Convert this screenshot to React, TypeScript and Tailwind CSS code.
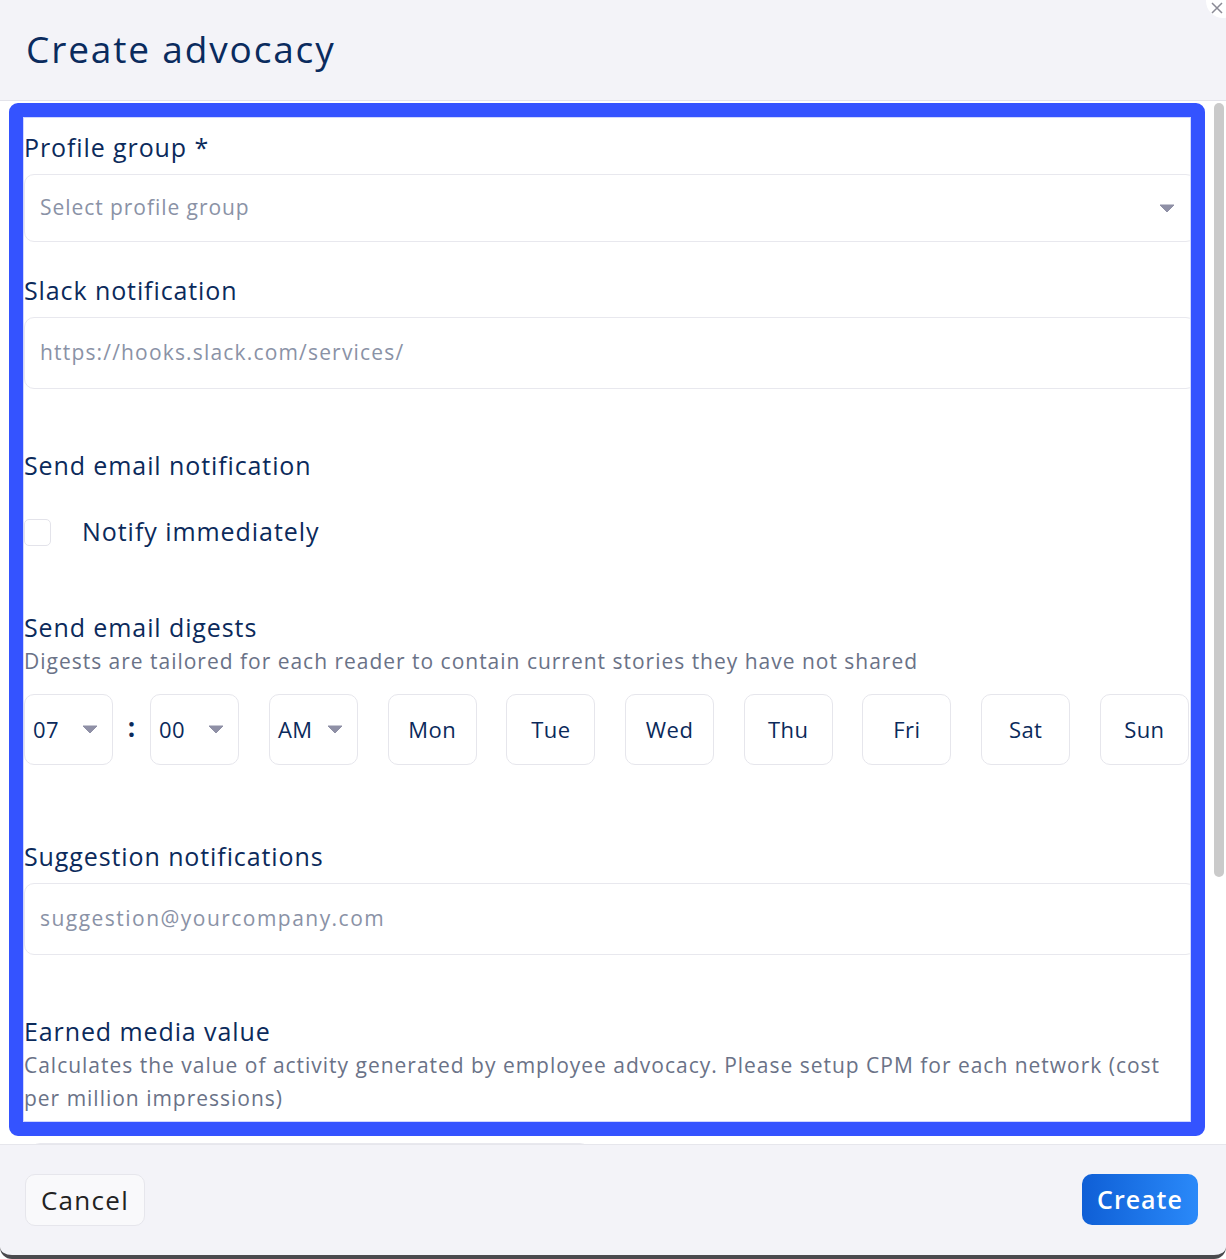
import React from "react";

const font = { fontFamily: '"Open Sans", "Noto Sans", sans-serif' };

function Caret({ className = "" }: { className?: string }) {
  return (
    <svg width="16" height="9" viewBox="0 0 16 9" className={className}>
      <path d="M1 1 L15 1 L8 8 Z" fill="#8f90a6" stroke="#8f90a6" strokeWidth="1" strokeLinejoin="round" />
    </svg>
  );
}

function Label({ children }: { children: React.ReactNode }) {
  return <div className="text-[25px] leading-[36px] tracking-[0.036em] text-[#0b2a5b]">{children}</div>;
}

function TimeSelect({ value }: { value: string }) {
  return (
    <div className="w-[89px] h-[71px] rounded-[10px] border border-[#e6e6ec] bg-white flex items-center justify-between pl-[8px] pr-[14px]">
      <span className="text-[22px] tracking-[0.02em] text-[#0b2a5b]">{value}</span>
      <Caret />
    </div>
  );
}

function DayBox({ day }: { day: string }) {
  return (
    <div className="w-[89px] h-[71px] rounded-[10px] border border-[#e6e6ec] bg-white flex items-center justify-center">
      <span className="text-[22px] tracking-[0.02em] text-[#0b2a5b]">{day}</span>
    </div>
  );
}

export default function App() {
  const days = ["Mon", "Tue", "Wed", "Thu", "Fri", "Sat", "Sun"];
  return (
    <div
      style={font}
      className="relative w-[1226px] h-[1259px] bg-[#f3f3f8] flex flex-col overflow-hidden rounded-b-[12px] border-b-4 border-[#4a4a4e]"
    >
      {/* close button */}
      <div className="absolute right-[-14px] top-[-16px] w-[34px] h-[34px] rounded-full bg-white flex items-end justify-start pl-[5px] pb-[4px] z-20">
        <svg width="12" height="12" viewBox="0 0 12 12">
          <path d="M1 1 L11 11 M11 1 L1 11" stroke="#8a8a95" strokeWidth="1.5" />
        </svg>
      </div>

      {/* header */}
      <div className="h-[101px] shrink-0 border-b border-[#e3e3ea] px-[26px] flex items-center">
        <h1 className="text-[37px] leading-none tracking-[0.05em] text-[#0a2b5e] pb-[3px]">Create advocacy</h1>
      </div>

      {/* body */}
      <div className="relative h-[1043px] shrink-0 bg-white overflow-hidden">
        <div className="pl-[24px] pr-[30px] pt-[28px] flex flex-col">
          <Label>Profile group *</Label>
          <div className="mt-[9px] h-[68px] rounded-[10px] border border-[#e8e8ee] flex items-center justify-between pl-[15px] pr-[20px]">
            <span className="text-[21px] tracking-[0.045em] text-[#8a92a6]">Select profile group</span>
            <Caret />
          </div>

          <div className="mt-[30px]">
            <Label>Slack notification</Label>
          </div>
          <div className="mt-[9px] h-[72px] rounded-[10px] border border-[#e8e8ee] flex items-center pl-[15px]">
            <span className="text-[21px] tracking-[0.056em] text-[#8a92a6]">https://hooks.slack.com/services/</span>
          </div>

          <div className="mt-[58px]">
            <Label>Send email notification</Label>
          </div>
          <div className="mt-[31px] h-[36px] flex items-center">
            <div className="w-[27px] h-[27px] rounded-[5px] border border-[#e3e3ea] bg-white" />
            <span className="ml-[31px] text-[25px] tracking-[0.038em] text-[#0b2a5b]">Notify immediately</span>
          </div>

          <div className="mt-[59px]">
            <Label>Send email digests</Label>
          </div>
          <div className="text-[21px] leading-[33px] tracking-[0.047em] text-[#6a7287]">
            Digests are tailored for each reader to contain current stories they have not shared
          </div>

          <div className="mt-[16px] flex items-center">
            <TimeSelect value="07" />
            <div className="w-[37px] text-center text-[26px] font-bold text-[#0b2a5b] leading-none pb-[6px]">:</div>
            <TimeSelect value="00" />
            <div className="ml-[30px] flex gap-[29.7px]">
              <TimeSelect value="AM" />
              {days.map((d) => (
                <DayBox key={d} day={d} />
              ))}
            </div>
          </div>

          <div className="mt-[73px]">
            <Label>Suggestion notifications</Label>
          </div>
          <div className="mt-[9px] h-[72px] rounded-[10px] border border-[#e8e8ee] flex items-center pl-[15px]">
            <span className="text-[21px] tracking-[0.07em] text-[#8a92a6]">suggestion@yourcompany.com</span>
          </div>

          <div className="mt-[58px]">
            <Label>Earned media value</Label>
          </div>
          <div className="text-[21px] leading-[33px] tracking-[0.047em] text-[#6a7287]">
            Calculates the value of activity generated by employee advocacy. Please setup CPM for each network (cost per million impressions)
          </div>

          <div className="mt-[28px] ml-[6px] w-[560px] h-[60px] rounded-[10px] border border-[#e8e8ee]" />
        </div>

        {/* highlight overlay */}
        <div className="absolute left-[9px] top-[2px] w-[1196px] h-[1033px] rounded-[9px] border-[14px] border-[#3453ff] pointer-events-none">
          <div className="absolute inset-0 border border-[#cfd6ff]" />
        </div>

        {/* scrollbar */}
        <div className="absolute left-[1214px] top-[2px] w-[10px] h-[774px] rounded-full bg-[#cacaca]" />
      </div>

      {/* footer */}
      <div className="flex-1 border-t border-[#e6e6ec] pl-[25px] pr-[28px] pt-[29px] flex items-start justify-between">
        <button className="h-[52px] w-[120px] rounded-[10px] border border-[#e6e6ec] bg-[#f9f9fb] text-[26px] tracking-[0.05em] text-[#222222]">
          Cancel
        </button>
        <button className="h-[51px] w-[116px] rounded-[10px] bg-gradient-to-r from-[#0f5fd6] to-[#2a89f9] text-[25px] font-semibold tracking-[0.04em] text-white">
          Create
        </button>
      </div>
    </div>
  );
}
